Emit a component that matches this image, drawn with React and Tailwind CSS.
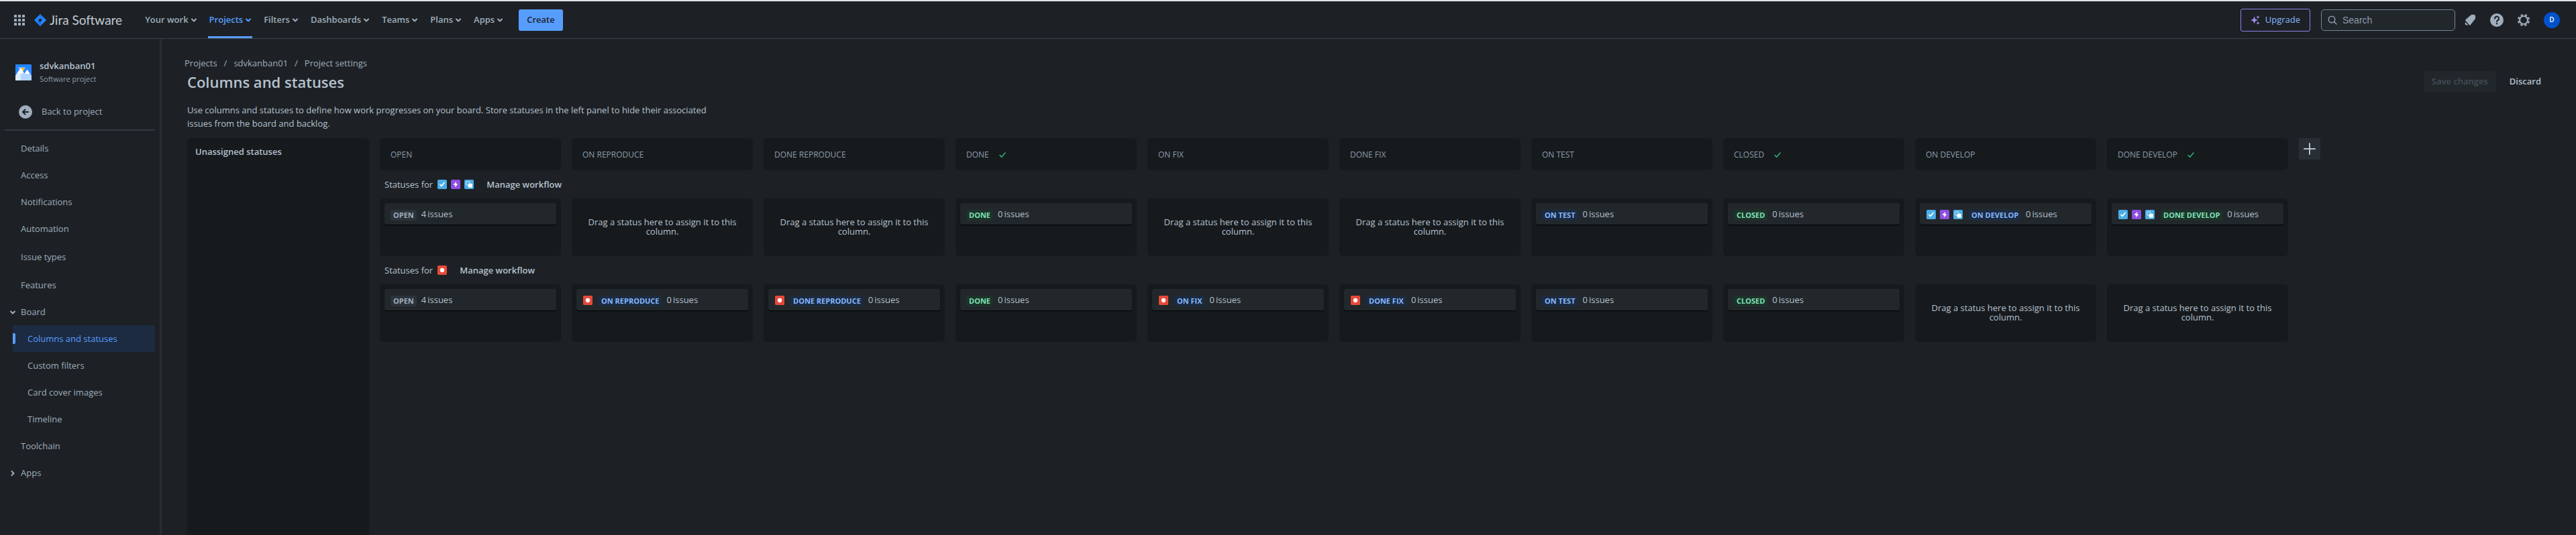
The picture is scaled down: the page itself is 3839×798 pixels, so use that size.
import React from "react";

const ISSUE_TYPES = { task: "task", epic: "epic", subtask: "subtask", bug: "bug" };

function IssueIcon({ type }) {
  return (
    <svg viewBox="0 0 16 16" className="size-[14px] shrink-0" role="img" aria-label={type}>
      <rect width="16" height="16" rx="2" fill={type === "epic" ? "#904ee2" : type === "bug" ? "#e5493a" : "#4bade8"} />
      {type === "task" && <path d="M4.500 8.500 6.800 10.800 11.500 5.200" fill="none" stroke="#fff" strokeWidth="2" strokeLinecap="round" strokeLinejoin="round" />}
      {type === "epic" && <path d="M8.800 3 4.600 8.400c-.2.3 0 .6.3.6H7.200v4l4.200-5.400c.2-.3 0-.6-.3-.6H8.800z" fill="#fff" />}
      {type === "subtask" && (
        <>
          <rect x="3.200" y="3.200" width="6" height="6" rx="1.500" fill="none" stroke="#b9dff7" strokeWidth="1.400" />
          <rect x="6.500" y="6.500" width="7" height="7" rx="1.500" fill="#fff" />
        </>
      )}
      {type === "bug" && <circle cx="8" cy="8" r="3.600" fill="#fff" />}
    </svg>
  );
}

function Chevron({ className = "" }) {
  return (
    <svg viewBox="0 0 8 8" className={`size-2 shrink-0 ${className}`} aria-hidden="true">
      <path d="M1 2.500 4 5.500 7 2.500" fill="none" stroke="currentColor" strokeWidth="2" strokeLinecap="round" strokeLinejoin="round" />
    </svg>
  );
}

function AppSwitcher() {
  return (
    <svg viewBox="0 0 16 16" className="size-4" fill="currentColor" aria-hidden="true">
      {[0, 6, 12].map((y) => [0, 6, 12].map((x) => <rect key={`${x}-${y}`} x={x} y={y} width="4" height="4" rx="0.6" />))}
    </svg>
  );
}

function JiraLogo() {
  return (
    <svg viewBox="0 0 18 18" className="size-[18px]" aria-hidden="true">
      <defs>
        <linearGradient id="jiraShade" x1="0.9" y1="0.1" x2="0.4" y2="0.7">
          <stop offset="0" stopColor="#0052cc" />
          <stop offset="1" stopColor="#2684ff" />
        </linearGradient>
      </defs>
      <path d="M9 0 17.600 8.400c.4.4.4.8 0 1.200L9 18 .4 9.600c-.4-.4-.4-.8 0-1.200z" fill="#2684ff" />
      <path d="M9 0c-1.600 2-1.600 4.200 0 6.100l2.900 2.900 2.900-3.300z" fill="url(#jiraShade)" />
      <path d="M9 18c1.600-2 1.600-4.200 0-6.100L6.100 9 3.200 12.300z" fill="url(#jiraShade)" />
      <path d="M9 6.200 11.800 9 9 11.800 6.200 9z" fill="#1d2125" />
    </svg>
  );
}

const NAV = ["Your work", "Projects", "Filters", "Dashboards", "Teams", "Plans", "Apps"];

function Header() {
  return (
    <header className="flex h-[58px] items-center border-t-2 border-b border-t-[#dfe3e6] border-b-[#38414a] pr-6 pl-[21px]">
      <button type="button" aria-label="Switch to" className="text-[#9fadbc]">
        <AppSwitcher />
      </button>
      <a href="#home" className="ml-[14px] flex items-center gap-[5px] text-[#c1c9d2]">
        <JiraLogo />
        <span className="font-['Lato','Open_Sans',sans-serif] text-[19px] leading-6">Jira Software</span>
      </a>
      <nav className="ml-8 flex h-full gap-[15px] text-[13px] font-semibold text-[#9fadbc]" aria-label="Primary">
        {NAV.map((label) => (
          <button
            key={label}
            type="button"
            className={
              label === "Projects"
                ? "flex h-full items-center gap-1 border-t-3 border-b-3 border-t-transparent border-b-[#579dff] px-[2px] text-[#579dff]"
                : "flex h-full items-center gap-1 px-[2px]"
            }
          >
            {label}
            <Chevron />
          </button>
        ))}
      </nav>
      <button type="button" className="ml-[22px] h-8 rounded-[3px] bg-[#579dff] px-3 text-[13px] font-semibold text-[#1d2125]">
        Create
      </button>
      <div className="ml-auto flex items-center">
        <button type="button" className="flex h-[34px] items-center gap-2 rounded-[3px] border border-[#8f7ee7] px-[14px] text-[13px] font-medium text-[#85b8ff]">
          <svg viewBox="0 0 14 14" className="size-[14px]" fill="#9f8fef" aria-hidden="true">
            <path d="M5.500 1.500 7 5.500 11 7 7 8.500 5.500 12.500 4 8.500 0 7 4 5.500z" />
            <path d="M11 0l.8 1.700 1.700.8-1.700.8L11 5l-.8-1.700-1.700-.8 1.700-.8zM11 9l.8 1.700 1.700.8-1.700.8L11 14l-.8-1.700-1.700-.8 1.700-.8z" />
          </svg>
          Upgrade
        </button>
        <label className="ml-4 flex h-8 w-[200px] items-center gap-2 rounded-[5px] border border-[#738496] bg-[#22272b] px-[9px] text-[#8c9bab]">
          <svg viewBox="0 0 14 14" className="size-[14px] shrink-0" fill="none" stroke="currentColor" strokeWidth="1.500" strokeLinecap="round" aria-hidden="true">
            <circle cx="6" cy="6" r="4.800" />
            <path d="m9.600 9.600 3.400 3.400" />
          </svg>
          <input
            type="text"
            aria-label="Search"
            placeholder="Search"
            className="w-full min-w-0 bg-transparent font-['Liberation_Sans',sans-serif] text-sm text-[#b6c2cf] outline-none placeholder:text-[#8c9bab]"
          />
        </label>
        <div className="ml-[10px] flex items-center gap-4 text-[#9fadbc]">
          <button type="button" aria-label="Notifications">
            <svg viewBox="0 0 24 24" className="size-6" fill="currentColor" aria-hidden="true">
              <path d="M5.300 11.500 12.600 5c1.600-1.300 3.800-1.700 5.700-.9.700.3 1.200.8 1.500 1.500.8 1.900.4 4.100-.9 5.700l-6.400 8.100c-.3.400-.9.400-1.200.1l-6-6.700c-.4-.4-.4-1 0-1.300z" />
              <path d="M5.200 15.200 9 19c-.9.900-2.500.9-3.500-.1s-1.200-2.800-.3-3.700z" />
            </svg>
          </button>
          <button type="button" aria-label="Help">
            <svg viewBox="0 0 24 24" className="size-6" aria-hidden="true">
              <circle cx="12" cy="12" r="10" fill="currentColor" />
              <path d="M9 9.700a3 3 0 1 1 4.500 2.500c-1 .6-1.500 1-1.500 2" fill="none" stroke="#1d2125" strokeWidth="2" strokeLinecap="round" />
              <circle cx="12" cy="17.200" r="1.200" fill="#1d2125" />
            </svg>
          </button>
          <button type="button" aria-label="Settings">
            <svg viewBox="0 0 24 24" className="size-6" fill="none" stroke="currentColor" aria-hidden="true">
              <circle cx="12" cy="12" r="6" strokeWidth="2.200" />
              <circle cx="12" cy="12" r="8" strokeWidth="2.400" strokeDasharray="3.140 3.143" strokeDashoffset="-1.600" />
            </svg>
          </button>
        </div>
        <button type="button" aria-label="Your profile" className="ml-[18px] size-6 rounded-full bg-[#0052cc] text-center text-[10px] font-semibold text-white">
          D
        </button>
      </div>
    </header>
  );
}

function SideItem({ children, className = "" }) {
  return (
    <a href="#settings" className={`flex h-10 items-center pt-[2px] pl-6 ${className}`}>
      {children}
    </a>
  );
}

function SideSubItem({ children }) {
  return (
    <a href="#board" className="ml-3 flex h-10 items-center pt-[2px] pl-[22px]">
      {children}
    </a>
  );
}

function Sidebar() {
  return (
    <aside className="w-[241px] shrink-0 border-r-3 border-[#282d32] pt-[30px] pr-[7px] pl-[7px] text-[13px] text-[#9fadbc]">
      <div className="flex items-center gap-3 pl-4">
        <svg viewBox="0 0 24 24" className="size-6 shrink-0" aria-hidden="true">
          <rect width="24" height="24" rx="1" fill="#2684ff" />
          <rect x="4" y="4" width="11" height="3" rx="1.500" fill="#6fb0ff" />
          <circle cx="11" cy="7.500" r="2.300" fill="#ffc400" />
          <path d="M0 17 8 5.500l5.500 8.500 4-6L24 17v6a1 1 0 0 1-1 1H1a1 1 0 0 1-1-1z" fill="#b3d4ff" />
          <path d="M0 17 8 6v18H1a1 1 0 0 1-1-1z" fill="#deebff" />
          <path d="M8 5 13 13.500l-2-1-2 1.500-2-1.500L3.500 14 2 14zM17.500 7.500l4.500 7-2-1-2 1-1.500-1-2 1-1-.5z" fill="#fff" />
        </svg>
        <div>
          <div className="leading-5 font-semibold text-[#b6c2cf]">sdvkanban01</div>
          <div className="text-[11px] leading-5 text-[#8c9bab]">Software project</div>
        </div>
      </div>
      <a href="#back" className="mt-[19px] flex h-10 items-center gap-[14px] pl-[21px]">
        <svg viewBox="0 0 20 20" className="size-5" aria-hidden="true">
          <circle cx="10" cy="10" r="10" fill="#9fadbc" />
          <path d="M14 10H6.500M9.500 6.500 6 10l3.500 3.500" fill="none" stroke="#1d2125" strokeWidth="2" strokeLinecap="round" strokeLinejoin="round" />
        </svg>
        Back to project
      </a>
      <hr className="mt-[6px] mb-[6px] border-t-2 border-[#323a41]" />
      <nav aria-label="Project settings">
        <SideItem>Details</SideItem>
        <SideItem>Access</SideItem>
        <SideItem>Notifications</SideItem>
        <SideItem>Automation</SideItem>
        <SideItem className="my-[2px]">Issue types</SideItem>
        <SideItem>Features</SideItem>
        <button type="button" className="flex h-10 w-full items-center gap-2 pt-[2px] pl-2">
          <Chevron />
          Board
        </button>
        <a href="#columns" aria-current="page" className="ml-3 flex h-10 items-center gap-[18px] rounded-[3px] bg-[#1c2b41] text-[#579dff]">
          <span className="h-4 w-1 rounded-r-xs bg-[#579dff]" />
          <span className="pt-[2px]">Columns and statuses</span>
        </a>
        <SideSubItem>Custom filters</SideSubItem>
        <SideSubItem>Card cover images</SideSubItem>
        <SideSubItem>Timeline</SideSubItem>
        <SideItem>Toolchain</SideItem>
        <button type="button" className="flex h-10 w-full items-center gap-2 pt-[2px] pl-2">
          <Chevron className="-rotate-90" />
          Apps
        </button>
      </nav>
    </aside>
  );
}

const COLUMNS = [
  { name: "OPEN" },
  { name: "ON REPRODUCE" },
  { name: "DONE REPRODUCE" },
  { name: "DONE", done: true },
  { name: "ON FIX" },
  { name: "DONE FIX" },
  { name: "ON TEST" },
  { name: "CLOSED", done: true },
  { name: "ON DEVELOP" },
  { name: "DONE DEVELOP", done: true },
];

const STANDARD = [ISSUE_TYPES.task, ISSUE_TYPES.epic, ISSUE_TYPES.subtask];
const BUG = [ISSUE_TYPES.bug];

const GROUPS = [
  {
    types: STANDARD,
    cells: [
      { name: "OPEN", tone: "gray", count: 4 },
      null,
      null,
      { name: "DONE", tone: "green", count: 0 },
      null,
      null,
      { name: "ON TEST", tone: "blue", count: 0 },
      { name: "CLOSED", tone: "green", count: 0 },
      { name: "ON DEVELOP", tone: "blue", count: 0, icons: STANDARD },
      { name: "DONE DEVELOP", tone: "green", count: 0, icons: STANDARD },
    ],
  },
  {
    types: BUG,
    cells: [
      { name: "OPEN", tone: "gray", count: 4 },
      { name: "ON REPRODUCE", tone: "blue", count: 0, icons: BUG },
      { name: "DONE REPRODUCE", tone: "blue", count: 0, icons: BUG },
      { name: "DONE", tone: "green", count: 0 },
      { name: "ON FIX", tone: "blue", count: 0, icons: BUG },
      { name: "DONE FIX", tone: "blue", count: 0, icons: BUG },
      { name: "ON TEST", tone: "blue", count: 0 },
      { name: "CLOSED", tone: "green", count: 0 },
      null,
      null,
    ],
  },
];

const TONES = {
  gray: "bg-[#2c333a] text-[#9fadbc]",
  blue: "bg-[#1c2b41] text-[#85b8ff]",
  green: "bg-[#1c3329] text-[#7ee2b8]",
};

function Cell({ status }) {
  if (!status) {
    return (
      <div className="flex h-[86px] w-[270px] shrink-0 items-center justify-center rounded-md bg-[#161a1d] px-4 pb-[2px] text-center text-[13px] leading-[14px] text-[#b6c2cf]">
        Drag a status here to assign it to this column.
      </div>
    );
  }
  return (
    <div className="h-[86px] w-[270px] shrink-0 rounded-md bg-[#161a1d] p-[7px]">
      <div className="flex h-8 items-center gap-[7px] rounded-[3px] bg-[#22272b] px-[9px] pt-[2px] text-[13px] text-[#b6c2cf] shadow-[0_1px_1px_#030404]">
        {status.icons && (
          <span className="flex gap-[6px] pr-[2px] pl-px">
            {status.icons.map((type) => (
              <IssueIcon key={type} type={type} />
            ))}
          </span>
        )}
        <span className={`mt-[2px] rounded-[3px] px-1 text-[11px] leading-4 font-bold ${TONES[status.tone]}`}>{status.name}</span>
        <span className="flex gap-[2px]">
          <span>{status.count}</span>
          <span>issues</span>
        </span>
      </div>
    </div>
  );
}

function Board() {
  return (
    <div className="mt-3 flex flex-1 gap-4">
      <section className="w-[271px] shrink-0 rounded-t-md bg-[#161a1d] px-3 pt-[10px]">
        <h2 className="text-[13px] leading-5 font-semibold text-[#b6c2cf]">Unassigned statuses</h2>
      </section>
      <div>
        <div className="flex gap-4">
          {COLUMNS.map((column) => (
            <div key={column.name} className="flex h-12 w-[270px] shrink-0 items-center gap-[15px] rounded-md bg-[#161a1d] px-4 pt-[2px] text-[12px] text-[#8c9bab]">
              {column.name}
              {column.done && (
                <svg viewBox="0 0 10 10" className="size-[10px]" role="img" aria-label="Done column">
                  <path d="M1 5.500 3.700 8.200 9 2" fill="none" stroke="#2abb7f" strokeWidth="1.400" strokeLinecap="round" strokeLinejoin="round" />
                </svg>
              )}
            </div>
          ))}
        </div>
        {GROUPS.map((group) => (
          <section key={group.types[0]}>
            <div className="flex h-[42px] items-center gap-[7px] pl-[7px] text-[13px] text-[#b6c2cf]">
              <span className="pt-[2px]">Statuses for</span>
              <span className="flex gap-[6px]">
                {group.types.map((type) => (
                  <IssueIcon key={type} type={type} />
                ))}
              </span>
              <button type="button" className="ml-3 pt-[2px] font-semibold">
                Manage workflow
              </button>
            </div>
            <div className="flex gap-4">
              {group.cells.map((status, index) => (
                <Cell key={COLUMNS[index].name} status={status} />
              ))}
            </div>
          </section>
        ))}
      </div>
      <button type="button" aria-label="Add column" className="flex size-8 shrink-0 items-center justify-center rounded-[3px] bg-[#282e33] text-[#b6c2cf]">
        <svg viewBox="0 0 18 18" className="size-[18px]" fill="none" stroke="currentColor" strokeWidth="2" strokeLinecap="round" aria-hidden="true">
          <path d="M9 1v16M1 9h16" />
        </svg>
      </button>
    </div>
  );
}

export default function App() {
  return (
    <div className="flex min-h-screen flex-col bg-[#1d2125] font-['Open_Sans','Noto_Sans',sans-serif] text-[#b6c2cf]">
      <Header />
      <div className="flex flex-1">
        <Sidebar />
        <main className="flex min-w-0 flex-1 flex-col pt-[26px] pr-10 pl-[38px]">
          <nav aria-label="Breadcrumbs" className="-ml-1 flex gap-[10px] text-[13px] leading-5 text-[#9fadbc]">
            <a href="#projects">Projects</a>
            <span>/</span>
            <a href="#project">sdvkanban01</a>
            <span>/</span>
            <a href="#project-settings">Project settings</a>
          </nav>
          <div className="flex h-9 items-center justify-between">
            <h1 className="text-[22px] leading-7 font-semibold">Columns and statuses</h1>
            <div className="flex gap-2 text-[13px] font-semibold">
              <button type="button" disabled className="h-8 rounded-[3px] bg-[#22272b] px-3 text-[#454f59]">
                Save changes
              </button>
              <button type="button" className="h-8 px-3 text-[#b6c2cf]">
                Discard
              </button>
            </div>
          </div>
          <p className="mt-[14px] max-w-[800px] text-[13px] leading-5">
            Use columns and statuses to define how work progresses on your board. Store statuses in the left panel to hide their associated issues from the board and backlog.
          </p>
          <Board />
        </main>
      </div>
    </div>
  );
}
